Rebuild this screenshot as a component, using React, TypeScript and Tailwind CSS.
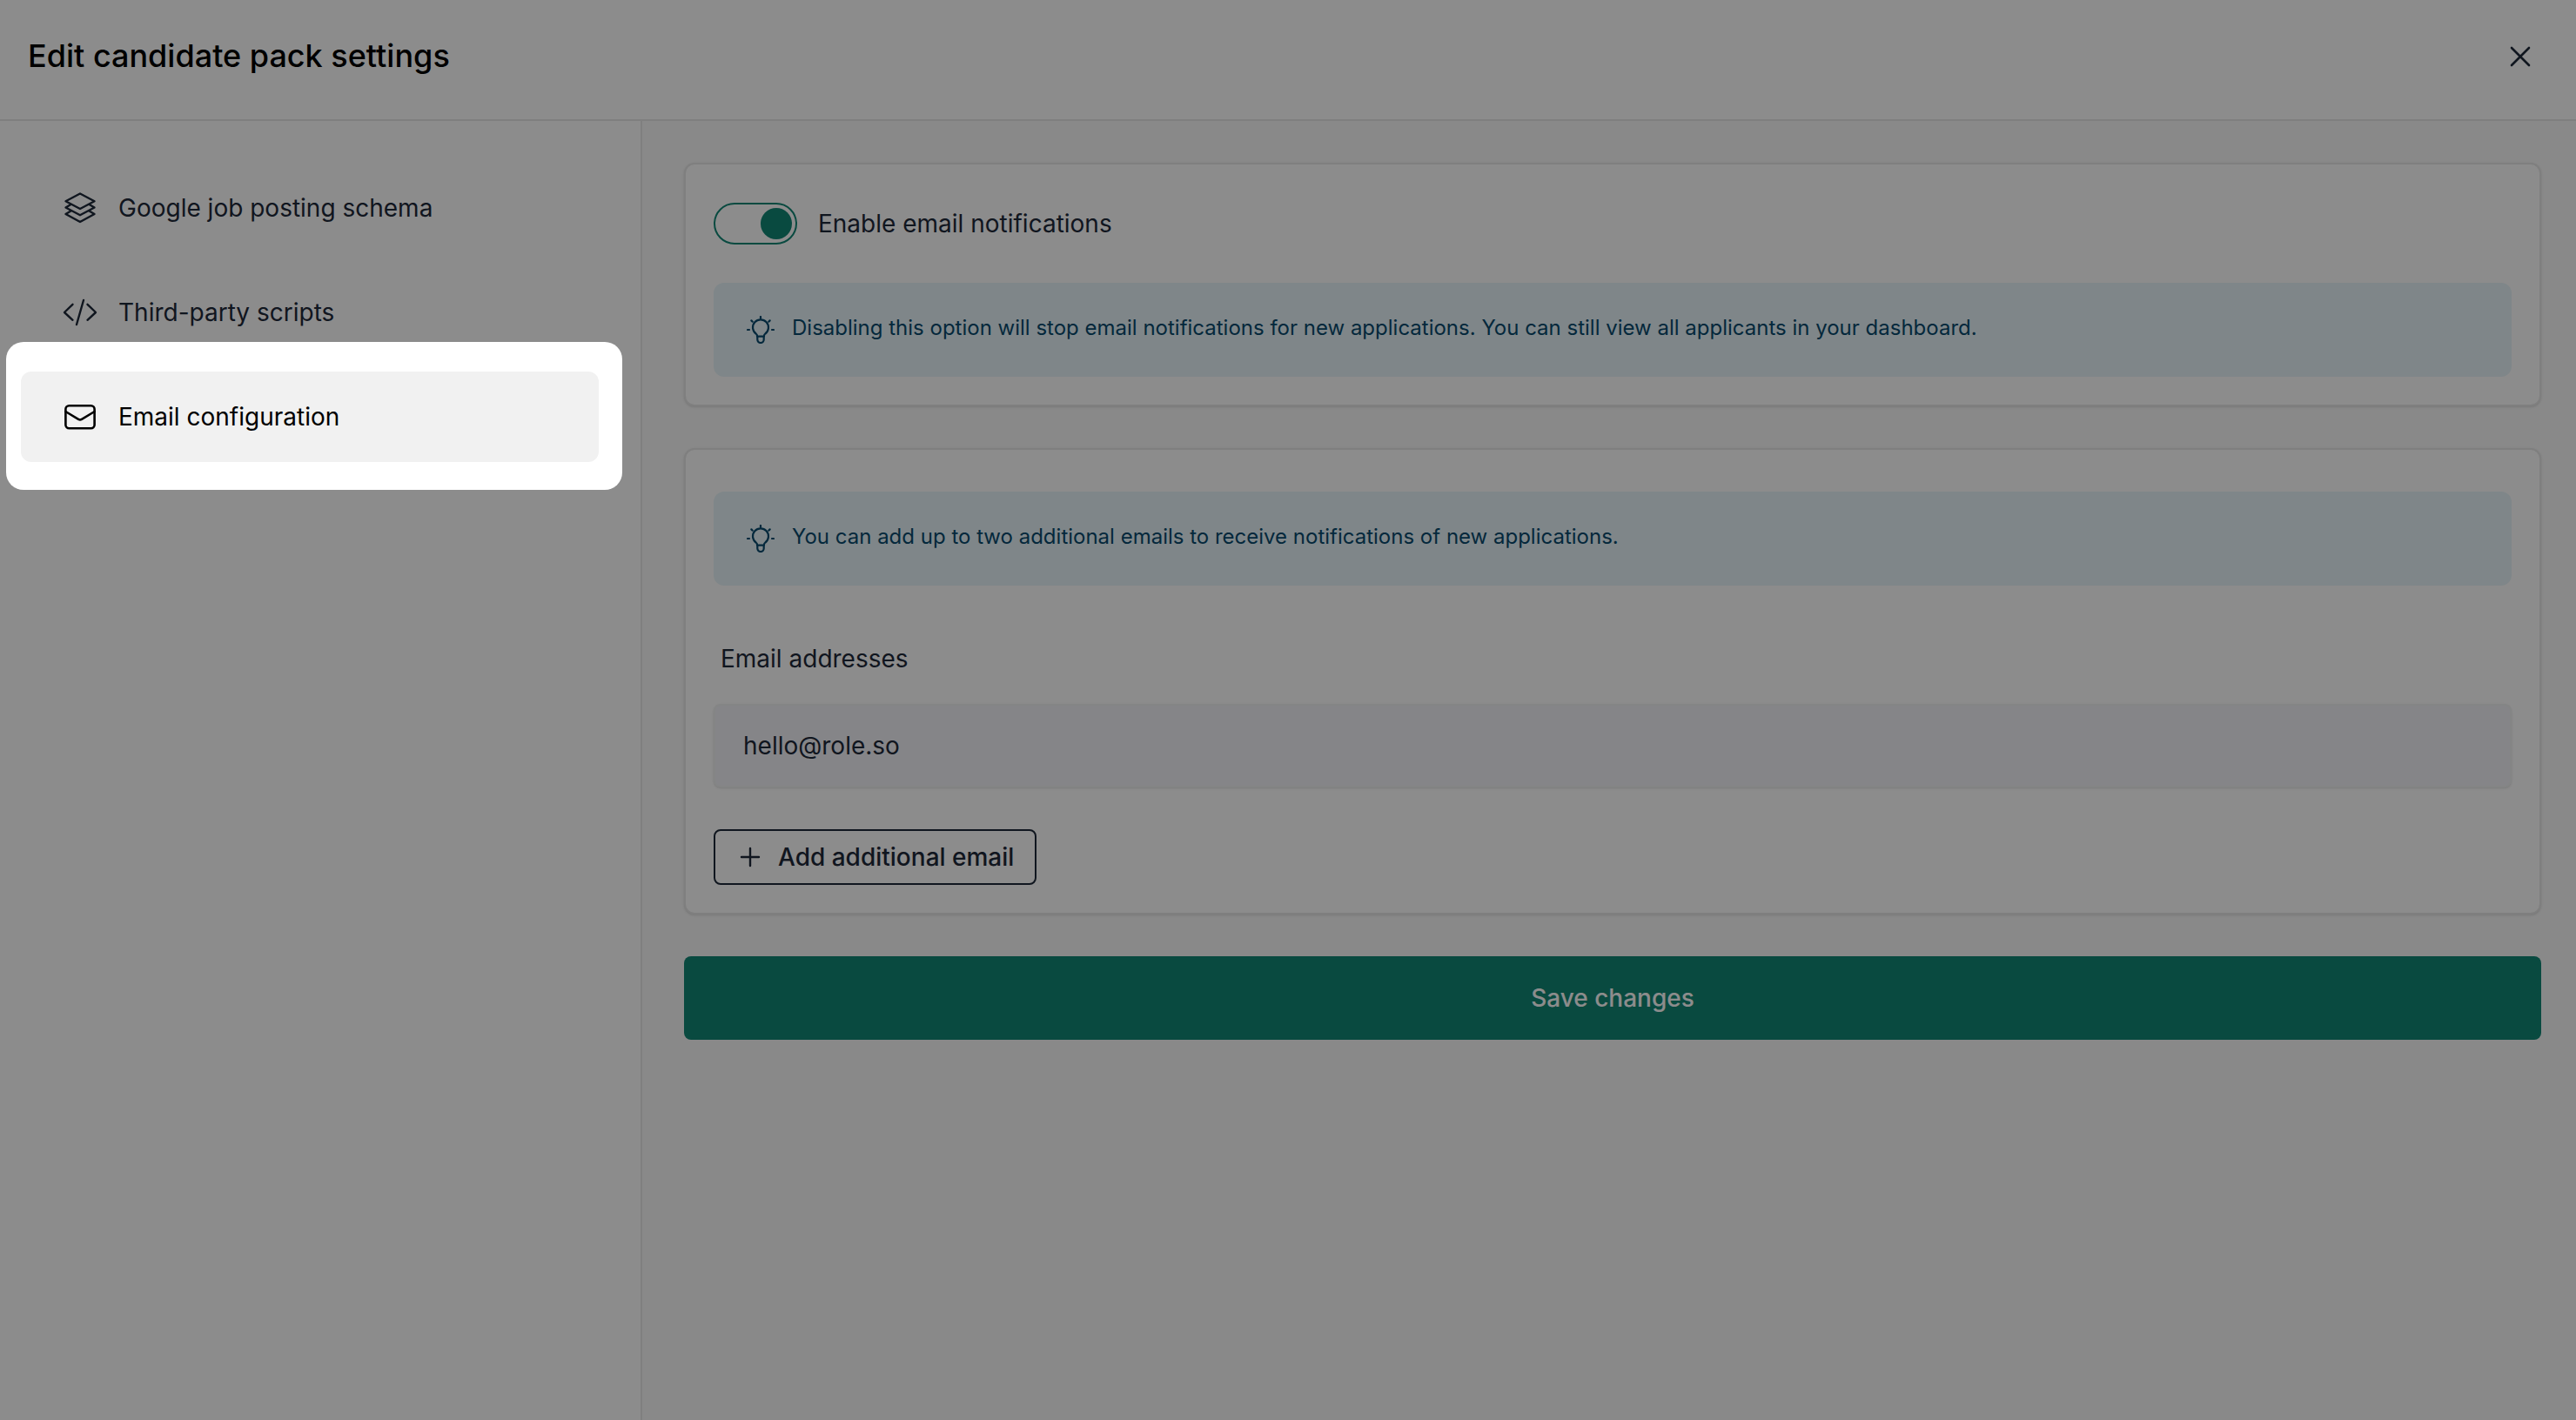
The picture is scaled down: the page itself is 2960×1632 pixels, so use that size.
import React, { useState } from "react";

interface IconProps {
  className?: string;
}

function LayersIcon({ className }: IconProps) {
  return (
    <svg viewBox="0 0 40 40" className={className} fill="none" stroke="currentColor" strokeWidth={2.4} strokeLinecap="round" strokeLinejoin="round" aria-hidden="true">
      <path d="M20 3.5 3.5 12.3 20 21l16.5-8.7L20 3.5Z" />
      <path d="M9 16.3 3.5 19.5 20 28.3l16.5-8.8-5.5-3.2" />
      <path d="M9 23.8 3.5 27 20 36l16.5-9-5.5-3.2" />
    </svg>
  );
}

function CodeIcon({ className }: IconProps) {
  return (
    <svg viewBox="0 0 40 40" className={className} fill="none" stroke="currentColor" strokeWidth={2.4} strokeLinecap="round" strokeLinejoin="round" aria-hidden="true">
      <path d="M11.5 10.8 2 20l9.5 8.8M28.5 10.8 38 20l-9.5 8.8M24 6l-8 28" />
    </svg>
  );
}

function MailIcon({ className }: IconProps) {
  return (
    <svg viewBox="0 0 40 40" className={className} fill="none" stroke="currentColor" strokeWidth={2.6} strokeLinecap="round" strokeLinejoin="round" aria-hidden="true">
      <rect x="3.4" y="7.2" width="33.2" height="26" rx="4" />
      <path d="m3.4 14 14.7 8.8a3.8 3.8 0 0 0 3.8 0L36.6 14" />
    </svg>
  );
}

function BulbIcon({ className }: IconProps) {
  return (
    <svg viewBox="0 0 32 32" className={className} fill="none" stroke="currentColor" strokeWidth={2.2} strokeLinecap="round" strokeLinejoin="round" aria-hidden="true">
      <path d="M12 23.6v-.8c0-.9-.6-1.6-1.4-2.3a9 9 0 1 1 10.800 0c-.8.7-1.4 1.4-1.4 2.3v.8Z" />
      <path d="M12.3 24v3.3a3.7 3.7 0 0 0 7.4 0V24" />
      <path d="M16 1v2M1 16h2M29 16h2M5.400 5.400l1.300 1.300M26.600 5.400l-1.300 1.300" />
    </svg>
  );
}

const NAV_ITEMS = [
  { id: "schema", label: "Google job posting schema", icon: LayersIcon },
  { id: "scripts", label: "Third-party scripts", icon: CodeIcon },
  { id: "email", label: "Email configuration", icon: MailIcon },
];

function Notice({ children }: { children: React.ReactNode }) {
  return (
    <div className="flex items-start gap-5 rounded-xl bg-[#e7f5f9] px-[38px] pt-8 pb-9 text-[#094a6e]">
      <BulbIcon className="mt-1.5 h-8 w-8 shrink-0" />
      <p className="text-2xl leading-10">{children}</p>
    </div>
  );
}

export default function App() {
  const [active, setActive] = useState("email");
  const [enabled, setEnabled] = useState(true);

  return (
    <div className="flex min-h-screen flex-col bg-white font-['Inter',sans-serif] text-[28px] leading-10 text-gray-800">
      <header className="flex items-center justify-between border-b-2 border-[#e7e7e7] pt-10 pr-10 pb-12 pl-8">
        <h1 className="text-4xl leading-[49px] font-medium text-black">Edit candidate pack settings</h1>
        <button type="button" aria-label="Close" className="flex h-12 w-12 items-center justify-center">
          <svg viewBox="0 0 24 24" className="h-6 w-6" fill="none" stroke="currentColor" strokeWidth={2.6} strokeLinecap="round" aria-hidden="true">
            <path d="m2 2 20 20M22 2 2 22" />
          </svg>
        </button>
      </header>

      <div className="flex grow">
        <nav className="w-[738px] shrink-0 border-r-2 border-[#e7e7e7] py-12 pr-12 pl-6">
          <ul className="flex flex-col gap-4">
            {NAV_ITEMS.map(({ id, label, icon: Icon }) => (
              <li key={id} className="relative">
                <button
                  type="button"
                  onClick={() => setActive(id)}
                  className={`flex w-full items-center gap-6 rounded-xl px-12 py-8 text-left ${
                    active === id ? "bg-[#f1f1f1] text-black" : ""
                  }`}
                >
                  <Icon className="h-10 w-10 shrink-0" />
                  {label}
                </button>
                {/* Spotlight: dims everything outside the active item */}
                {active === id && (
                  <span className="pointer-events-none absolute -top-[34px] -right-[27px] -bottom-8 -left-[17px] z-10 rounded-[20px] shadow-[0_0_0_9999px_rgba(0,0,0,0.45)]" />
                )}
              </li>
            ))}
          </ul>
        </nav>

        <main className="flex grow flex-col gap-12 bg-[#f9f9f9] py-12 pr-10 pl-12">
          <section className="flex flex-col gap-11 rounded-xl border-2 border-[#e7e7e7] bg-white px-8 pt-11 pb-8 shadow-sm">
            <div className="flex items-center gap-6">
              <input
                id="notifications"
                type="checkbox"
                role="switch"
                checked={enabled}
                onChange={(e) => setEnabled(e.target.checked)}
                className="flex h-12 w-24 cursor-pointer appearance-none items-center rounded-full border-2 border-[#128776] px-1 before:h-9 before:w-9 before:rounded-full before:bg-[#128776] checked:justify-end"
              />
              <label htmlFor="notifications">Enable email notifications</label>
            </div>
            <Notice>
              Disabling this option will stop email notifications for new applications. You can still view all
              applicants in your dashboard.
            </Notice>
          </section>

          <section className="flex flex-col rounded-xl border-2 border-[#e7e7e7] bg-white px-8 pt-12 pb-8 shadow-sm">
            <Notice>You can add up to two additional emails to receive notifications of new applications.</Notice>
            <label htmlFor="email" className="mt-16 mb-8 px-2">
              Email addresses
            </label>
            <input
              id="email"
              type="email"
              readOnly
              value="hello@role.so"
              className="h-24 w-full rounded-lg border-2 border-[#f0f2f3] bg-[#f2f3f7] px-8 shadow-sm outline-none"
            />
            <button
              type="button"
              className="mt-12 flex h-16 items-center gap-4 self-start rounded-lg border-2 border-gray-800 px-6 font-medium"
            >
              <svg viewBox="0 0 32 32" className="h-8 w-8" fill="none" stroke="currentColor" strokeWidth={2.4} strokeLinecap="round" aria-hidden="true">
                <path d="M16 6v20M6 16h20" />
              </svg>
              Add additional email
            </button>
          </section>

          <button type="button" className="h-24 rounded-lg bg-[#128776] font-medium text-white">
            Save changes
          </button>
        </main>
      </div>
    </div>
  );
}
